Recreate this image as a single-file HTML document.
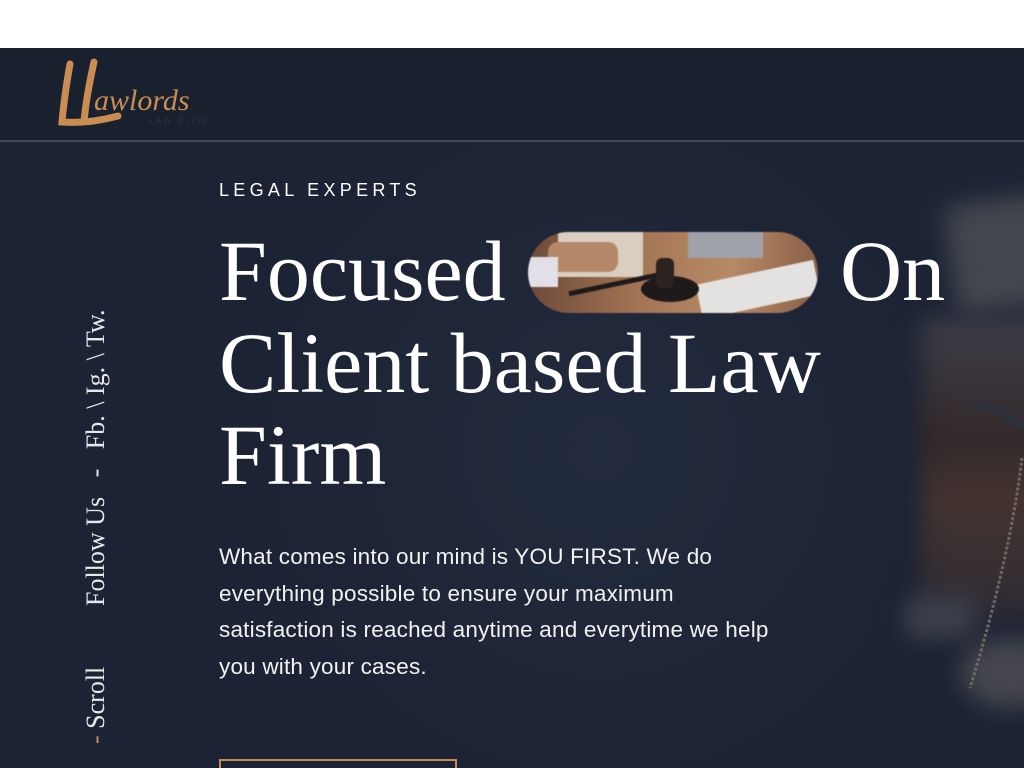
<!DOCTYPE html>
<html><head><meta charset="utf-8"><style>
*{margin:0;padding:0;box-sizing:border-box}
html,body{width:1024px;height:768px;overflow:hidden;background:#fff}
.hero{position:absolute;top:48px;left:0;width:1024px;height:720px;background:radial-gradient(ellipse 500px 500px at 600px 400px,#222a3d,#1b2334 70%),#1b2334;overflow:hidden}
.hdr{position:absolute;top:0;left:0;width:1024px;height:94px;border-bottom:2px solid #3e4859;background:#19212f}
.bg{position:absolute;filter:blur(12px)}
.logo{position:absolute;left:54px;top:10px}
.t{position:absolute;color:#fff}
.serif{font-family:"Liberation Serif",serif}
.sans{font-family:"Liberation Sans",sans-serif}
</style></head><body>
<div class="hero">
 <div class="bg" style="left:950px;top:150px;width:120px;height:110px;background:#44464e;border-radius:10px;transform:rotate(-8deg)"></div>
 <div class="bg" style="left:920px;top:270px;width:150px;height:300px;background:linear-gradient(#3c3e47,#33292b 40%,#43332f 60%,#2e2c35)"></div>
 <div class="bg" style="left:905px;top:550px;width:70px;height:40px;background:#3d414b"></div>
 <div class="bg" style="left:960px;top:590px;width:100px;height:70px;background:#46474d;border-radius:50%"></div>
 <svg style="position:absolute;left:960px;top:340px" width="64" height="320"><path d="M14 24 Q30 10 50 30 L64 40" stroke="#2e3139" stroke-width="8" fill="none"/><path d="M62 70 Q50 170 10 300" stroke="#6e675f" stroke-width="3" stroke-dasharray="3 2" fill="none"/></svg>
 <div class="hdr"></div>
 <svg class="logo" width="170" height="75">
  <path d="M16 6 Q10 40 8 64 Q34 66 64 58 M40 4 Q32 40 30 64" stroke="#c98d54" stroke-width="7" fill="none" stroke-linecap="round"/>
  <text x="40" y="52" font-family="Liberation Serif" font-style="italic" font-size="30" fill="#c98d54">awlords</text>
  <text x="94" y="65" font-family="Liberation Sans" font-size="9" letter-spacing="3" fill="#2b3444">Law Firm</text>
 </svg>
 <div class="t sans" style="left:219px;top:132px;font-size:18px;letter-spacing:4.3px">LEGAL EXPERTS</div>
 <div class="t serif" style="left:219px;top:177px;font-size:86px;line-height:92px;white-space:nowrap">Focused<br>Client based Law<br>Firm</div>
 <div class="t serif" style="left:840px;top:177px;font-size:86px;line-height:92px">On</div>
 <div style="position:absolute;left:528px;top:184px;width:290px;height:81px;border-radius:41px;overflow:hidden;background:linear-gradient(90deg,#6d4a38,#a57656 40%,#b78a66 70%,#8a6047);filter:blur(0.5px)">
  <div style="position:absolute;left:30px;top:0;width:85px;height:45px;background:#d8cfc0"></div>
  <div style="position:absolute;left:20px;top:10px;width:70px;height:30px;background:#b48868;border-radius:10px"></div>
  <div style="position:absolute;left:0;top:25px;width:30px;height:30px;background:#e0e0e6"></div>
  <div style="position:absolute;left:160px;top:0;width:75px;height:26px;background:#9fa2a8"></div>
  <div style="position:absolute;left:170px;top:40px;width:120px;height:35px;background:#e4e2e0;transform:rotate(-12deg)"></div>
  <div style="position:absolute;left:40px;top:50px;width:90px;height:5px;background:#1e1a1a;transform:rotate(-12deg)"></div>
  <div style="position:absolute;left:113px;top:44px;width:58px;height:26px;background:#1e1a1a;border-radius:50%"></div>
  <div style="position:absolute;left:128px;top:26px;width:18px;height:30px;background:#2a2320;border-radius:6px"></div>
 </div>
 <div class="t sans" style="left:219px;top:491px;font-size:22.5px;line-height:36.5px;white-space:nowrap;color:#f2f2f2;letter-spacing:0.2px">What comes into our mind is YOU FIRST. We do<br>everything possible to ensure your maximum<br>satisfaction is reached anytime and everytime we help<br>you with your cases.</div>
 <div class="t serif" style="left:81px;top:558px;transform-origin:0 0;transform:rotate(-90deg);font-size:26px;white-space:nowrap;color:#e8e8e8">Follow Us &nbsp;&nbsp;-&nbsp;&nbsp; Fb. \ Ig. \ Tw.</div>
 <div class="t serif" style="left:81px;top:696px;transform-origin:0 0;transform:rotate(-90deg);font-size:26px;white-space:nowrap;color:#e8e8e8"><span style="color:#c98d54">-</span> Scroll</div>
 <div style="position:absolute;left:219px;top:711px;width:238px;height:20px;border:2px solid #c98d54;border-bottom:none"></div>
</div>
</body></html>
